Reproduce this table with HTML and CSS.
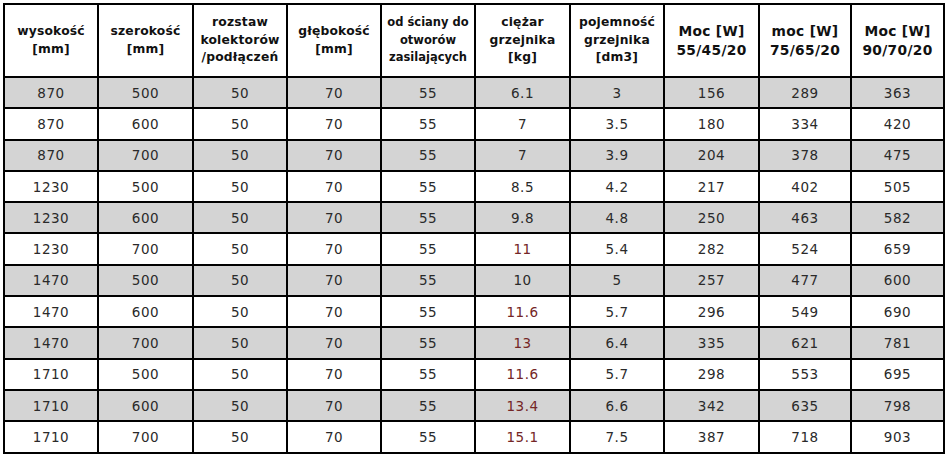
FILE: index.html
```html
<!DOCTYPE html>
<html lang="pl">
<head>
<meta charset="utf-8">
<title>Tabela grzejników</title>
<link rel="stylesheet" href="styles.css">
</head>
<body>
<table class="spec">
  <colgroup>
    <col class="c94"><col class="c95"><col class="c94"><col class="c94"><col class="c94">
    <col class="c95"><col class="c94"><col class="c95"><col class="c92"><col class="c93">
  </colgroup>
  <thead>
    <tr>
      <th>wysokość<br>[mm]</th>
      <th>szerokość<br>[mm]</th>
      <th>rozstaw<br>kolektorów<br>/podłączeń</th>
      <th>głębokość<br>[mm]</th>
      <th class="tight">od ściany do<br>otworów<br>zasilających</th>
      <th>ciężar<br>grzejnika<br>[kg]</th>
      <th>pojemność<br>grzejnika<br>[dm3]</th>
      <th class="big">Moc [W]<br>55/45/20</th>
      <th class="big">moc [W]<br>75/65/20</th>
      <th class="big">Moc [W]<br>90/70/20</th>
    </tr>
  </thead>
  <tbody>
    <tr class="g"><td>870</td><td>500</td><td>50</td><td>70</td><td>55</td><td>6.1</td><td>3</td><td>156</td><td>289</td><td>363</td></tr>
    <tr><td>870</td><td>600</td><td>50</td><td>70</td><td>55</td><td>7</td><td>3.5</td><td>180</td><td>334</td><td>420</td></tr>
    <tr class="g"><td>870</td><td>700</td><td>50</td><td>70</td><td>55</td><td>7</td><td>3.9</td><td>204</td><td>378</td><td>475</td></tr>
    <tr><td>1230</td><td>500</td><td>50</td><td>70</td><td>55</td><td>8.5</td><td>4.2</td><td>217</td><td>402</td><td>505</td></tr>
    <tr class="g"><td>1230</td><td>600</td><td>50</td><td>70</td><td>55</td><td>9.8</td><td>4.8</td><td>250</td><td>463</td><td>582</td></tr>
    <tr><td>1230</td><td>700</td><td>50</td><td>70</td><td>55</td><td class="hl">11</td><td>5.4</td><td>282</td><td>524</td><td>659</td></tr>
    <tr class="g"><td>1470</td><td>500</td><td>50</td><td>70</td><td>55</td><td>10</td><td>5</td><td>257</td><td>477</td><td>600</td></tr>
    <tr><td>1470</td><td>600</td><td>50</td><td>70</td><td>55</td><td class="hl">11.6</td><td>5.7</td><td>296</td><td>549</td><td>690</td></tr>
    <tr class="g"><td>1470</td><td>700</td><td>50</td><td>70</td><td>55</td><td class="hl">13</td><td>6.4</td><td>335</td><td>621</td><td>781</td></tr>
    <tr><td>1710</td><td>500</td><td>50</td><td>70</td><td>55</td><td class="hl">11.6</td><td>5.7</td><td>298</td><td>553</td><td>695</td></tr>
    <tr class="g"><td>1710</td><td>600</td><td>50</td><td>70</td><td>55</td><td class="hl">13.4</td><td>6.6</td><td>342</td><td>635</td><td>798</td></tr>
    <tr><td>1710</td><td>700</td><td>50</td><td>70</td><td>55</td><td class="hl">15.1</td><td>7.5</td><td>387</td><td>718</td><td>903</td></tr>
  </tbody>
</table>
</body>
</html>
```

FILE: styles.css
```css
html, body {
  margin: 0;
  padding: 0;
  background: #fff;
}

body {
  padding: 3px 0 0 3px;
}

.spec {
  border-collapse: collapse;
  table-layout: fixed;
  width: 942px;
  font-family: "DejaVu Sans", Verdana, sans-serif;
}

.c94 { width: 94px; }
.c95 { width: 95px; }
.c92 { width: 92px; }
.c93 { width: 93px; }

.spec th,
.spec td {
  border: 2px solid #000;
  padding: 0;
  text-align: center;
  vertical-align: middle;
}

.spec th {
  height: 71px;
  font-size: 12.3px;
  font-weight: bold;
  line-height: 17.5px;
  color: #111;
  letter-spacing: 0.2px;
}

.spec th.tight {
  letter-spacing: 0;
  font-size: 11.5px;
}

.spec th.big {
  font-size: 13.8px;
  line-height: 19px;
  letter-spacing: 0.3px;
}

.spec td {
  height: 29.3px;
  font-size: 13.5px;
  color: #2a2a2a;
  letter-spacing: 0.5px;
}

.spec tr.g td {
  background: #d4d4d4;
}

.spec td.hl {
  color: #742626;
}
```
